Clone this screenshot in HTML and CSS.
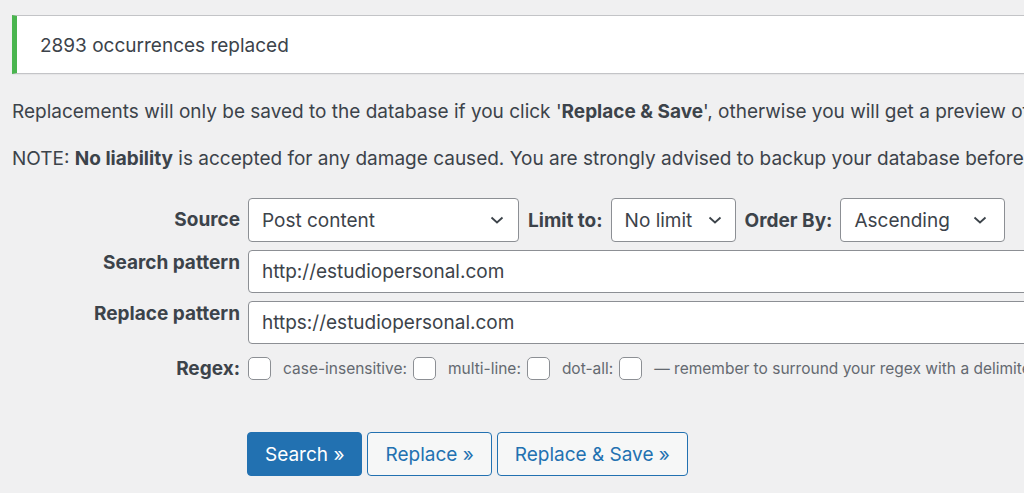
FILE: index.html
```html
<!DOCTYPE html>
<html lang="en">
<head>
<meta charset="utf-8">
<title>Search Regex</title>
<link rel="stylesheet" href="styles.css">
</head>
<body>
<div class="wrap">
  <div class="notice"><p>2893 occurrences replaced</p></div>
  <p class="info">Replacements will only be saved to the database if you click '<strong>Replace &amp; Save</strong>', otherwise you will get a preview of the results.</p>
  <p class="info">NOTE: <strong>No liability</strong> is accepted for any damage caused. You are strongly advised to backup your database before making any changes.</p>

  <form class="search-form">
    <div class="row row-center">
      <span class="label">Source</span>
      <div class="field inline">
        <div class="select sel-source">Post content
          <svg class="chev" viewBox="0 0 14 8" width="14" height="8"><path d="M1.5 1.5 7 6.5 12.5 1.5" fill="none" stroke="#3c434a" stroke-width="1.8"/></svg>
        </div>
        <span class="inline-label">Limit to:</span>
        <div class="select sel-limit">No limit
          <svg class="chev" viewBox="0 0 14 8" width="14" height="8"><path d="M1.5 1.5 7 6.5 12.5 1.5" fill="none" stroke="#3c434a" stroke-width="1.8"/></svg>
        </div>
        <span class="inline-label">Order By:</span>
        <div class="select sel-order">Ascending
          <svg class="chev" viewBox="0 0 14 8" width="14" height="8"><path d="M1.5 1.5 7 6.5 12.5 1.5" fill="none" stroke="#3c434a" stroke-width="1.8"/></svg>
        </div>
      </div>
    </div>
    <div class="row">
      <span class="label label-top">Search pattern</span>
      <div class="field"><div class="input">http://estudiopersonal.com</div></div>
    </div>
    <div class="row">
      <span class="label label-top">Replace pattern</span>
      <div class="field"><div class="input">https://estudiopersonal.com</div></div>
    </div>
    <div class="row row-center row-regex">
      <span class="label">Regex:</span>
      <div class="field inline small">
        <span class="check"></span>
        <span class="opt">case-insensitive:</span><span class="check"></span>
        <span class="opt">multi-line:</span><span class="check"></span>
        <span class="opt">dot-all:</span><span class="check"></span>
        <span class="opt note">— remember to surround your regex with a delimiter!</span>
      </div>
    </div>
    <div class="buttons">
      <span class="btn btn-primary">Search »</span>
      <span class="btn">Replace »</span>
      <span class="btn">Replace &amp; Save »</span>
    </div>
  </form>
</div>
</body>
</html>
```
FILE: styles.css
```css
html, body {
  margin: 0;
  padding: 0;
  background: #f0f0f1;
  overflow: hidden;
}
body {
  font-family: Inter, "Open Sans", sans-serif;
  font-size: 19px;
  color: #3c434a;
  width: 1024px;
  height: 493px;
}
.wrap {
  padding-left: 12px;
  width: 1400px;
}
.notice {
  margin-top: 15px;
  background: #fff;
  border: 1px solid #c3c4c7;
  border-left: 5px solid #4ab54f;
  box-shadow: 0 1px 1px rgba(0,0,0,0.04);
  height: 57px;
  display: flex;
  align-items: center;
  padding-left: 23px;
}
.notice p { margin: 0; padding-top: 2px; }
.info {
  margin: 0;
  white-space: nowrap;
  line-height: 24px;
}
.notice + .info { margin-top: 26px; }
.info + .info { margin-top: 23px; }
.info strong { font-weight: 700; }

.search-form { margin-top: 27px; }
.row {
  display: flex;
  align-items: flex-start;
  margin-bottom: 8px;
}
.row-center { align-items: center; }
.label {
  width: 228px;
  flex: none;
  text-align: right;
  font-weight: 700;
  margin-right: 8px;
  line-height: 22px;
}
.label-top { padding-top: 2px; }
.field { flex: none; }
.inline {
  display: flex;
  align-items: center;
}
.select {
  height: 44px;
  box-sizing: border-box;
  border: 1px solid #8c8f94;
  border-radius: 4px;
  background: #fff;
  display: flex;
  align-items: center;
  justify-content: space-between;
  padding: 0 12px 0 13px;
}
.chev { flex: none; }
.sel-source { width: 271px; padding-right: 14px; }
.sel-limit { width: 125px; padding-right: 13px; }
.sel-order { width: 165px; padding-right: 17px; }
.inline-label {
  font-weight: 700;
  margin: 0 8px 0 9px;
}
.input {
  width: 1000px;
  height: 43px;
  box-sizing: border-box;
  border: 1px solid #8c8f94;
  border-radius: 4px;
  background: #fff;
  display: flex;
  align-items: center;
  padding-left: 13px;
}
.row-regex { margin-top: 13px; }
.small { font-size: 15.5px; color: #646970; }
.check {
  width: 23px;
  height: 23px;
  box-sizing: border-box;
  border: 1px solid #8c8f94;
  border-radius: 5px;
  background: #fff;
  flex: none;
}
.opt { margin: 0 6px 0 12px; white-space: nowrap; }
.note { margin-right: 0; }

.buttons {
  display: flex;
  gap: 5px;
  margin-left: 235px;
  margin-top: 52px;
}
.btn {
  height: 44px;
  box-sizing: border-box;
  border: 1px solid #2271b1;
  border-radius: 4px;
  background: #f6f7f7;
  color: #2271b1;
  display: flex;
  align-items: center;
  padding: 0 17px;
}
.btn-primary {
  background: #2271b1;
  color: #fff;
}
```
